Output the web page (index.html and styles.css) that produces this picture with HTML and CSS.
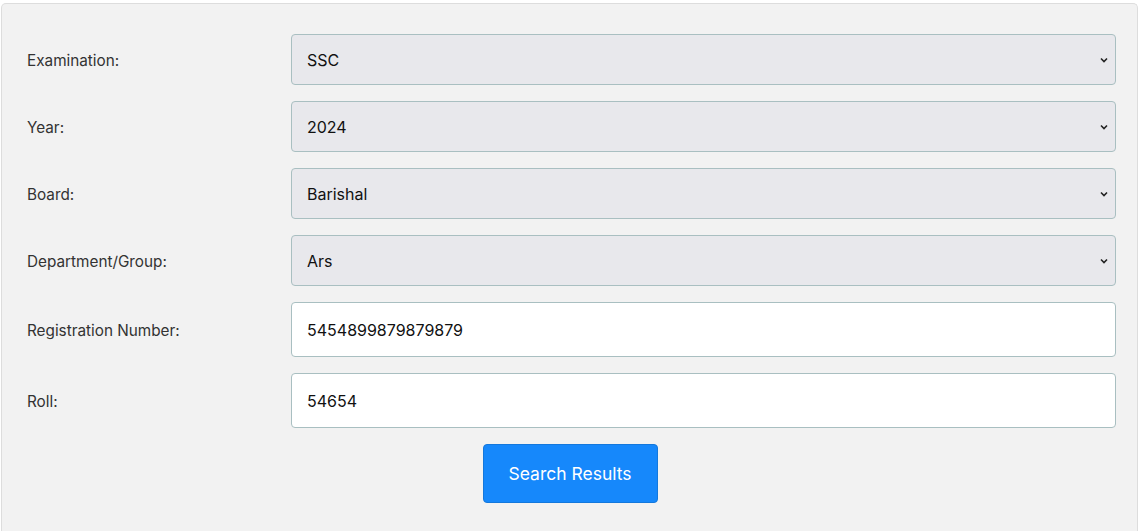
FILE: index.html
```html
<!DOCTYPE html>
<html>
<head>
<meta charset="utf-8">
<link rel="stylesheet" href="styles.css">
</head>
<body>
<div class="card">
  <form class="form">
    <label class="lbl">Examination:</label>
    <div class="sel-wrap">
      <select class="ctl sel"><option>SSC</option></select>
      <svg class="chev" width="8" height="6" viewBox="0 0 8 6"><path d="M1 1.5 L4 4.5 L7 1.5" fill="none" stroke="#222" stroke-width="1.6"/></svg>
    </div>
    <label class="lbl">Year:</label>
    <div class="sel-wrap">
      <select class="ctl sel"><option>2024</option></select>
      <svg class="chev" width="8" height="6" viewBox="0 0 8 6"><path d="M1 1.5 L4 4.5 L7 1.5" fill="none" stroke="#222" stroke-width="1.6"/></svg>
    </div>
    <label class="lbl">Board:</label>
    <div class="sel-wrap">
      <select class="ctl sel"><option>Barishal</option></select>
      <svg class="chev" width="8" height="6" viewBox="0 0 8 6"><path d="M1 1.5 L4 4.5 L7 1.5" fill="none" stroke="#222" stroke-width="1.6"/></svg>
    </div>
    <label class="lbl">Department/Group:</label>
    <div class="sel-wrap">
      <select class="ctl sel"><option>Ars</option></select>
      <svg class="chev" width="8" height="6" viewBox="0 0 8 6"><path d="M1 1.5 L4 4.5 L7 1.5" fill="none" stroke="#222" stroke-width="1.6"/></svg>
    </div>
    <label class="lbl">Registration Number:</label>
    <input class="ctl inp" type="text" value="5454899879879879">
    <label class="lbl">Roll:</label>
    <input class="ctl inp" type="text" value="54654">
  </form>
  <div class="actions">
    <button class="btn" type="button">Search Results</button>
  </div>
</div>
</body>
</html>
```
FILE: styles.css
```css
html, body {
  margin: 0;
  padding: 0;
  background: #ffffff;
}
body {
  font-family: Inter, "Liberation Sans", Arial, sans-serif;
  color: #333;
  padding: 3px 1px 0 1px;
}
.card {
  background: #f2f2f2;
  border: 1px solid #dddddd;
  border-bottom: 0;
  border-radius: 5px 5px 0 0;
  height: 528px;
  padding: 30px 21px 0 25px;
  box-sizing: border-box;
}
.form {
  display: grid;
  grid-template-columns: 264px 1fr;
  row-gap: 16px;
  align-items: center;
}
.lbl {
  font-size: 15.3px;
  color: #333;
  padding-top: 1px;
}
.sel-wrap {
  position: relative;
}
.ctl {
  display: block;
  width: 100%;
  box-sizing: border-box;
  border: 1px solid #a9bfc1;
  border-radius: 4px;
  font-family: inherit;
  font-size: 16px;
  color: #111;
  padding: 0 15px;
  margin: 0;
  outline: none;
}
.sel {
  height: 51px;
  background: #e8e8ec;
  appearance: none;
  -webkit-appearance: none;
}
.chev {
  position: absolute;
  right: 8px;
  top: 23px;
}
.inp {
  height: 55px;
  background: #ffffff;
}
.actions {
  display: flex;
  justify-content: center;
  padding-top: 16px;
  padding-right: 3px;
}
.btn {
  width: 175px;
  height: 59px;
  background: #1688fb;
  border: 1px solid #1478dc;
  border-radius: 4px;
  color: #fff;
  font-family: inherit;
  font-size: 17.5px;
  cursor: pointer;
}
```
